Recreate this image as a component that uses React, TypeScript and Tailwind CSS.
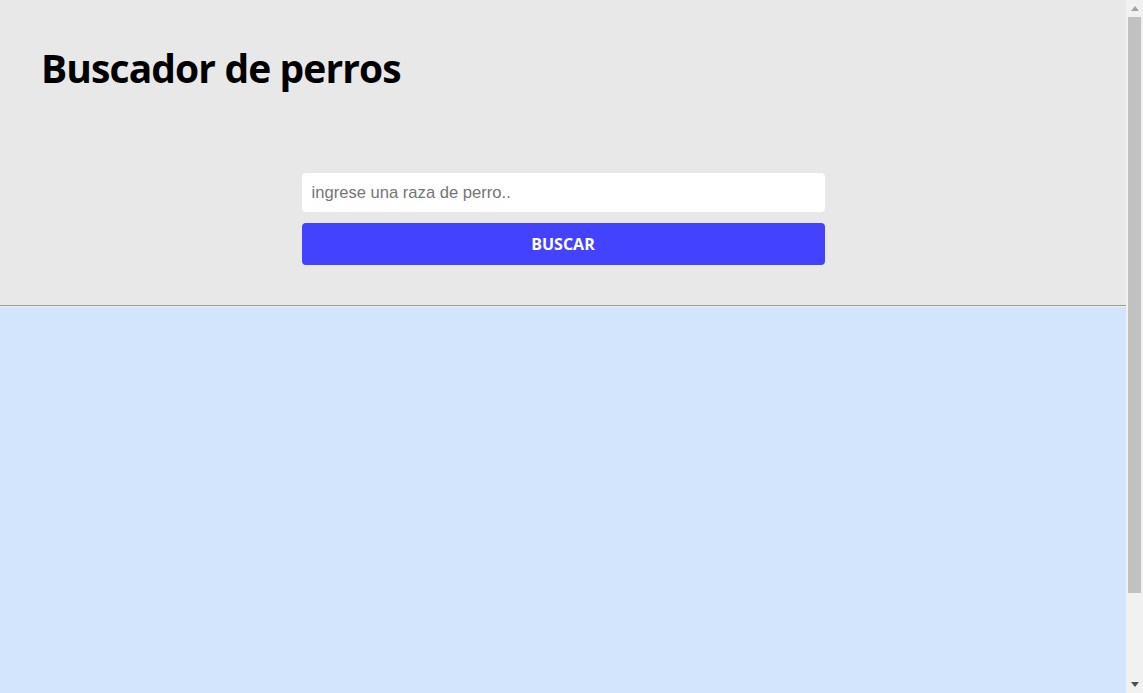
import { useState } from "react";

export default function App() {
  const [breed, setBreed] = useState("");

  return (
    <div className="flex h-[693px] overflow-hidden font-['Open_Sans',sans-serif]">
      <div className="flex min-w-0 flex-1 flex-col">
        <header className="h-[305px] shrink-0 bg-[#e8e8e8] pt-[48px]">
          <h1 className="px-[41px] text-[39px] font-bold leading-[40px] tracking-[-0.9px] text-black">
            Buscador de perros
          </h1>
          <form
            className="mx-auto mt-[85px] flex w-[523px] flex-col gap-[11px]"
            onSubmit={(e) => e.preventDefault()}
          >
            <input
              className="h-[39px] w-full rounded-[4px] bg-white px-[10px] font-['Liberation_Sans',sans-serif] text-[16.6px] text-black placeholder-[#757575] outline-none"
              placeholder="ingrese una raza de perro.."
              value={breed}
              onChange={(e) => setBreed(e.target.value)}
            />
            <button
              type="submit"
              className="h-[42px] w-full rounded-[4px] bg-[#4343ff] text-[16px] font-bold text-white"
            >
              BUSCAR
            </button>
          </form>
        </header>
        <hr className="shrink-0 border-t border-b border-t-[#9a9a9a] border-b-[#eeeeee]" />
        <main className="flex-1 bg-[#d3e5fc]"></main>
      </div>

      {/* scrollbar */}
      <div className="flex w-[17px] shrink-0 flex-col items-center bg-[#f1f1f1]">
        <div className="flex h-[17px] w-full items-center justify-center">
          <svg width="8" height="5" viewBox="0 0 8 5">
            <path d="M0 5 L4 0 L8 5 Z" fill="#a3a3a3" />
          </svg>
        </div>
        <div className="h-[576px] w-[13px] bg-[#c1c1c1]" />
        <div className="flex-1" />
        <div className="flex h-[17px] w-full items-center justify-center">
          <svg width="8" height="5" viewBox="0 0 8 5">
            <path d="M0 0 L8 0 L4 5 Z" fill="#505050" />
          </svg>
        </div>
      </div>
    </div>
  );
}
